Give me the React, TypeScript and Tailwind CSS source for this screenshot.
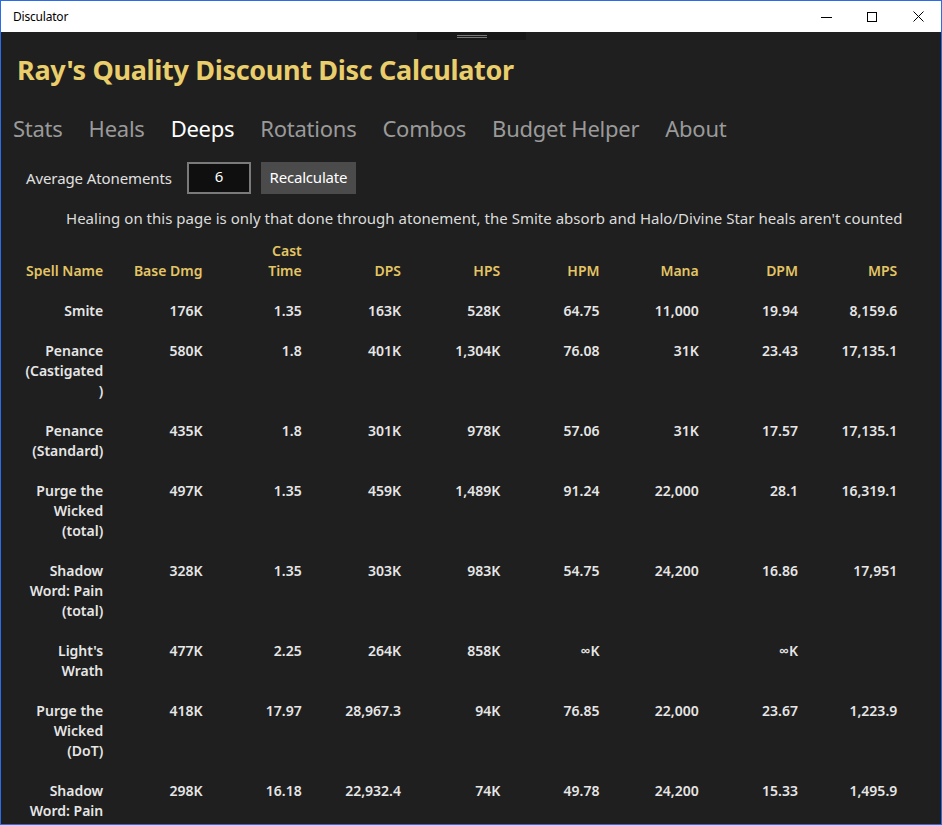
import React from 'react';

type Row = { name: string[]; cells: string[] };

const headers: string[][] = [
    ['Spell Name'],
    ['Base Dmg'],
    ['Cast', 'Time'],
    ['DPS'],
    ['HPS'],
    ['HPM'],
    ['Mana'],
    ['DPM'],
    ['MPS'],
];

const rows: Row[] = [
    { name: ['Smite'], cells: ['176K', '1.35', '163K', '528K', '64.75', '11,000', '19.94', '8,159.6'] },
    { name: ['Penance', '(Castigated', ')'], cells: ['580K', '1.8', '401K', '1,304K', '76.08', '31K', '23.43', '17,135.1'] },
    { name: ['Penance', '(Standard)'], cells: ['435K', '1.8', '301K', '978K', '57.06', '31K', '17.57', '17,135.1'] },
    { name: ['Purge the', 'Wicked', '(total)'], cells: ['497K', '1.35', '459K', '1,489K', '91.24', '22,000', '28.1', '16,319.1'] },
    { name: ['Shadow', 'Word: Pain', '(total)'], cells: ['328K', '1.35', '303K', '983K', '54.75', '24,200', '16.86', '17,951'] },
    { name: ["Light's", 'Wrath'], cells: ['477K', '2.25', '264K', '858K', '∞K', '', '∞K', ''] },
    { name: ['Purge the', 'Wicked', '(DoT)'], cells: ['418K', '17.97', '28,967.3', '94K', '76.85', '22,000', '23.67', '1,223.9'] },
    { name: ['Shadow', 'Word: Pain', '(DoT)'], cells: ['298K', '16.18', '22,932.4', '74K', '49.78', '24,200', '15.33', '1,495.9'] },
];

const tabs = ['Stats', 'Heals', 'Deeps', 'Rotations', 'Combos', 'Budget Helper', 'About'];

function Lines({ lines }: { lines: string[] }) {
    return (
        <>
            {lines.map((l, i) => (
                <div key={i} className="h-[20px] leading-[20px] whitespace-nowrap">{l || '\u00a0'}</div>
            ))}
        </>
    );
}

export default function App() {
    return (
        <div
            className="w-[942px] h-[825px] border border-[#2b6de8] bg-[#1f1f1f] flex flex-col overflow-hidden"
            style={{ fontFamily: '"Noto Sans", "Open Sans", sans-serif' }}
        >
            {/* title bar */}
            <div className="h-[31px] bg-white flex items-center shrink-0 text-black">
                <span className="ml-[12px] text-[12px] tracking-[-0.2px]">Disculator</span>
                <div className="ml-auto flex h-full">
                    <div className="w-[46px] h-full flex items-center justify-center">
                        <div className="w-[11px] h-px bg-black mt-[2px]" />
                    </div>
                    <div className="w-[46px] h-full flex items-center justify-center">
                        <div className="w-[10px] h-[10px] border border-black" />
                    </div>
                    <div className="w-[46px] h-full flex items-center justify-center">
                        <svg width="11" height="11" viewBox="0 0 11 11">
                            <path d="M0.5 0.5 L10.5 10.5 M10.5 0.5 L0.5 10.5" stroke="black" strokeWidth="1" />
                        </svg>
                    </div>
                </div>
            </div>

            {/* content */}
            <div className="relative flex-1 flex flex-col">
                <div className="absolute left-[416px] top-0 w-[109px] h-[8px] bg-[#181818] flex flex-col items-center justify-center gap-[1px]">
                    <div className="w-[30px] h-px bg-[#777]" />
                    <div className="w-[30px] h-px bg-[#777]" />
                </div>

                <h1 className="mt-[20px] ml-[16px] h-[36px] leading-[36px] text-[27px] font-bold text-[#e9ce6b] tracking-[-0.32px]">
                    Ray's Quality Discount Disc Calculator
                </h1>

                <div className="mt-[25px] ml-[12px] flex gap-[26px] text-[22px] leading-[30px] text-[#9a9a9a] tracking-[-0.25px]">
                    {tabs.map((t) => (
                        <span key={t} className={t === 'Deeps' ? 'text-white' : ''}>{t}</span>
                    ))}
                </div>

                <div className="mt-[19px] ml-[25px] flex items-center h-[32px] text-[15px] text-[#e0e0e0]">
                    <span className="tracking-[-0.1px]">Average Atonements</span>
                    <div className="ml-[15px] w-[64px] h-[32px] border-2 border-[#7a7a7a] bg-[#0f0f0f] flex items-center justify-center text-white">
                        <span className="-mt-[3px]">6</span>
                    </div>
                    <button className="ml-[10px] w-[95px] h-[32px] bg-[#4b4b4b] text-white tracking-[-0.2px] pb-[2px]">
                        Recalculate
                    </button>
                </div>

                <p className="mt-[14px] ml-[65px] text-[15px] leading-[20px] text-[#dcdcdc] whitespace-nowrap tracking-[0.02px]">
                    Healing on this page is only that done through atonement, the Smite absorb and Halo/Divine Star heals aren't counted
                </p>

                {/* table */}
                <div className="mt-[13px] ml-[3px] flex flex-col gap-[20px] text-[14px] font-semibold">
                    <div className="grid grid-cols-[repeat(9,99.25px)] items-end text-[#e3c565]">
                        {headers.map((h, i) => (
                            <div key={i} className="text-right">
                                <Lines lines={h} />
                            </div>
                        ))}
                    </div>
                    {rows.map((r, ri) => (
                        <div key={ri} className="grid grid-cols-[repeat(9,99.25px)] items-start text-[#e6e6e6]">
                            <div className="text-right">
                                <Lines lines={r.name} />
                            </div>
                            {r.cells.map((c, ci) => (
                                <div key={ci} className="text-right">
                                    <Lines lines={[c]} />
                                </div>
                            ))}
                        </div>
                    ))}
                </div>
            </div>
        </div>
    );
}
